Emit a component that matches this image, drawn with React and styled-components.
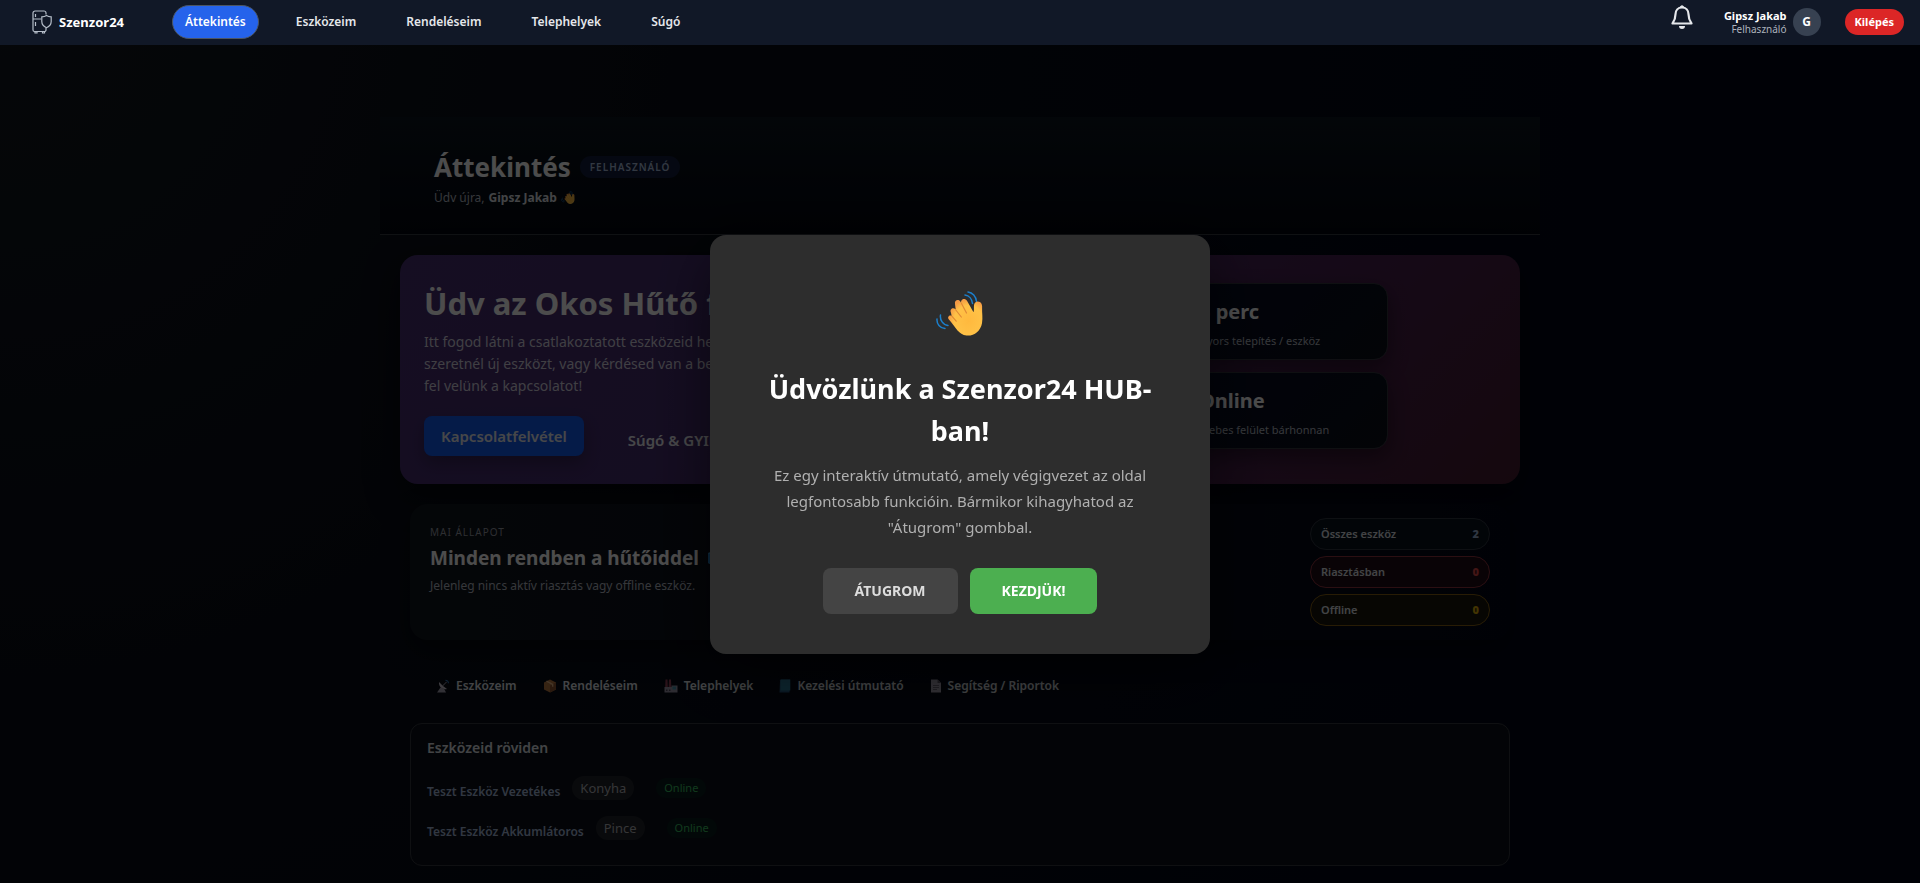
import { useState } from 'react';
import styled, { createGlobalStyle, css } from 'styled-components';

const navItems = ['Áttekintés', 'Eszközeim', 'Rendeléseim', 'Telephelyek', 'Súgó'];

const heroStats = [
  { value: '5 perc', label: 'Gyors telepítés / eszköz' },
  { value: 'Online', label: 'Webes felület bárhonnan' },
];

const counters = [
  { label: 'Összes eszköz', value: 2, tone: 'neutral' },
  { label: 'Riasztásban', value: 0, tone: 'danger' },
  { label: 'Offline', value: 0, tone: 'warning' },
];

const devices = [
  { name: 'Teszt Eszköz Vezetékes', place: 'Konyha', status: 'Online' },
  { name: 'Teszt Eszköz Akkumlátoros', place: 'Pince', status: 'Online' },
];

function App() {
  const [active, setActive] = useState('Áttekintés');
  const [tourOpen, setTourOpen] = useState(true);

  return (
    <>
      <GlobalStyle />
      <TopBar>
        <Brand href="#">
          <FridgeLogo />
          Szenzor24
        </Brand>
        <Nav>
          {navItems.map((item) => (
            <NavLink
              key={item}
              href="#"
              $active={item === active}
              onClick={() => setActive(item)}
            >
              {item}
            </NavLink>
          ))}
        </Nav>
        <BellButton type="button" aria-label="Értesítések">
          <BellIcon />
        </BellButton>
        <UserBox>
          <div>
            <UserName>Gipsz Jakab</UserName>
            <UserRole>Felhasználó</UserRole>
          </div>
          <Avatar>G</Avatar>
        </UserBox>
        <LogoutButton type="button">Kilépés</LogoutButton>
      </TopBar>

      <Main>
        <PageHeader>
          <TitleRow>
            <PageTitle>Áttekintés</PageTitle>
            <RoleBadge>Felhasználó</RoleBadge>
          </TitleRow>
          <Greeting>
            Üdv újra, <strong>Gipsz Jakab</strong>
            <WaveIcon size={14} />
          </Greeting>
        </PageHeader>

        <Hero>
          <HeroText>
            <HeroTitle>Üdv az Okos Hűtő felületén!</HeroTitle>
            <HeroLead>
              Itt fogod látni a csatlakoztatott eszközeid helyzetét. Ha
              <br />
              szeretnél új eszközt, vagy kérdésed van a beállításról, vedd
              <br />
              fel velünk a kapcsolatot!
            </HeroLead>
            <HeroActions>
              <PrimaryLink href="#">Kapcsolatfelvétel</PrimaryLink>
              <GhostLink href="#">Súgó &amp; GYIK</GhostLink>
            </HeroActions>
          </HeroText>
          <StatList>
            {heroStats.map((stat) => (
              <StatCard key={stat.value}>
                <StatValue>{stat.value}</StatValue>
                <StatLabel>{stat.label}</StatLabel>
              </StatCard>
            ))}
          </StatList>
        </Hero>

        <StatusCard>
          <div>
            <StatusEyebrow>Mai állapot</StatusEyebrow>
            <StatusTitle>
              Minden rendben a hűtőiddel
              <CubeIcon />
            </StatusTitle>
            <StatusText>Jelenleg nincs aktív riasztás vagy offline eszköz.</StatusText>
          </div>
          <CounterList>
            {counters.map((counter) => (
              <Counter key={counter.label} $tone={counter.tone}>
                <span>{counter.label}</span>
                <b>{counter.value}</b>
              </Counter>
            ))}
          </CounterList>
        </StatusCard>

        <QuickLinks>
          <QuickLink href="#">
            <DishIcon />
            Eszközeim
          </QuickLink>
          <QuickLink href="#">
            <BoxIcon />
            Rendeléseim
          </QuickLink>
          <QuickLink href="#">
            <FactoryIcon />
            Telephelyek
          </QuickLink>
          <QuickLink href="#">
            <BookIcon />
            Kezelési útmutató
          </QuickLink>
          <QuickLink href="#">
            <PageIcon />
            Segítség / Riportok
          </QuickLink>
        </QuickLinks>

        <DevicePanel>
          <PanelTitle>Eszközeid röviden</PanelTitle>
          {devices.map((device) => (
            <DeviceRow key={device.name}>
              <DeviceLink href="#">{device.name}</DeviceLink>
              <PlaceBadge>{device.place}</PlaceBadge>
              <OnlineBadge>{device.status}</OnlineBadge>
            </DeviceRow>
          ))}
        </DevicePanel>
      </Main>

      {tourOpen && (
        <Overlay>
          <Modal role="dialog" aria-modal="true" aria-labelledby="tour-title">
            <WaveIcon size={48} />
            <ModalTitle id="tour-title">Üdvözlünk a Szenzor24 HUB-ban!</ModalTitle>
            <ModalText>
              Ez egy interaktív útmutató, amely végigvezet az oldal legfontosabb
              funkcióin. Bármikor kihagyhatod az "Átugrom" gombbal.
            </ModalText>
            <ModalActions>
              <ModalButton type="button" onClick={() => setTourOpen(false)}>
                Átugrom
              </ModalButton>
              <ModalButton type="button" $primary>
                Kezdjük!
              </ModalButton>
            </ModalActions>
          </Modal>
        </Overlay>
      )}
    </>
  );
}

export default App;

function FridgeLogo() {
  return (
    <svg width="20" height="24" viewBox="0 0 20 24" fill="none" stroke="#b6bec9" strokeWidth="1.2">
      <path d="M14 4.500V3a2 2 0 0 0-2-2H3a2 2 0 0 0-2 2v17a1.500 1.500 0 0 0 1.500 1.500h10A1.500 1.500 0 0 0 14 20v-2" />
      <path d="M1 9h8M3.500 4v3M3.500 12v4M3 21.500V23h2v-1.500M10.500 21.500V23h2v-1.500" />
      <path d="M14.500 5.500c1.500 1 3 1.300 4.700 1.300v4.700c0 3-2 5-4.700 6.200-2.700-1.200-4.700-3.200-4.700-6.200V6.800c1.700 0 3.200-.3 4.700-1.300Z" />
    </svg>
  );
}

function BellIcon() {
  return (
    <svg width="24" height="26" viewBox="0 0 24 26" fill="none">
      <path
        d="M12 3.500c-4 0-6.500 3-6.500 6.800 0 4.700-1.200 6.700-3 9.200h19c-1.800-2.500-3-4.500-3-9.200 0-3.800-2.500-6.800-6.500-6.800Z"
        stroke="#e5e7eb"
        strokeWidth="2.200"
        strokeLinejoin="round"
      />
      <path d="M10.300 3.500a1.700 1.700 0 0 1 3.400 0" fill="#e5e7eb" stroke="#e5e7eb" />
      <path d="M9 22h6a3 3 0 0 1-6 0Z" fill="#e5e7eb" />
    </svg>
  );
}

function WaveIcon({ size }) {
  return (
    <svg width={size} height={size} viewBox="0 0 48 48" fill="none">
      <defs>
        <radialGradient id={`palm${size}`} cx="0.6" cy="0.6" r="0.6">
          <stop offset="0" stopColor="#ffb93e" />
          <stop offset="0.7" stopColor="#ffc247" />
          <stop offset="1" stopColor="#f59a45" />
        </radialGradient>
      </defs>
      <g stroke="#1c7fcb" strokeWidth="1.500" strokeLinecap="round">
        <path d="M32 1c4.500.5 8 4.500 8.500 9.500M29 4c4 .5 7 4 7.500 8.500" />
        <path d="M1 28c-.5 5 3 9 8 9.500M4.500 24c-.8 5 2.500 10 7.500 10.500" />
      </g>
      <path
        d="M15 31 12.500 28c-1.300-2 1-4.500 3.200-3l-.8-3.500c-1.500-3.500 2.300-5.800 4.800-3l-.7-5.500c-.8-4 3.800-5.500 5.600-2l.6 1c-1-3.800 3.600-5.800 5.800-2.300l6.500 11.500c.7-2 .3-4.500.5-7 .2-4.500 5.800-5 7.500-1.500.7 1.500.7 3 .6 4.500-.2 5 .9 9-.1 15-1.500 8-8 13-15.500 12.300-4-.4-6.500-2.500-9-5Z"
        fill={`url(#palm${size})`}
      />
      <g stroke="#e08a35" strokeWidth="1.200" strokeLinecap="round">
        <path d="m25.500 12.500 5 9.500M19.800 19l5.500 7M15.800 25.200l4.400 5" />
      </g>
    </svg>
  );
}

function CubeIcon() {
  return (
    <svg width="18" height="18" viewBox="0 0 18 18">
      <path d="M1 4 9 1l8 3v10l-8 3-8-3Z" fill="#5ab8ea" />
      <path d="m1 4 8 3v10l-8-3Z" fill="#2a86c9" />
    </svg>
  );
}

function DishIcon() {
  return (
    <svg width="14" height="14" viewBox="0 0 14 14">
      <path d="M3 3c-.5 4.500 3 8 8 7L7 7Z" fill="#cfc9d8" />
      <path d="M4.500 8.500 1 13.500h9L8 9.500Z" fill="#a8a3b4" />
      <path d="m6.500 7 4-4" stroke="#a9a4b5" strokeWidth="1" />
      <path d="M9.500 1.300a3 3 0 0 1 3 3" stroke="#2f6fae" strokeWidth="1.200" fill="none" />
    </svg>
  );
}

function BoxIcon() {
  return (
    <svg width="14" height="14" viewBox="0 0 14 14">
      <path d="m7 .5 6 3v7l-6 3-6-3v-7Z" fill="#b97842" />
      <path d="m7 6.500 6-3v7l-6 3Z" fill="#8c5530" />
      <path d="m3.500 2.200 6.200 3.100v2.500" stroke="#e6b98a" strokeWidth="1.300" fill="none" />
    </svg>
  );
}

function FactoryIcon() {
  return (
    <svg width="14" height="14" viewBox="0 0 14 14">
      <path d="M1.500.5h2l.3 8H1.200ZM5 .5h2l.3 8H4.700Z" fill="#8e3f55" />
      <path d="M.5 8h7V6.500h6v7H.5Z" fill="#9a95a8" />
      <path d="M8.500 7.500H12v3H8.500Z" fill="#4794ae" />
      <path d="M2 10.500h1.500V12H2ZM5 10.500h1.500V12H5Z" fill="#4c4858" />
    </svg>
  );
}

function BookIcon() {
  return (
    <svg width="12" height="14" viewBox="0 0 12 14">
      <path d="M1 1.500.5 13.500h10l.5-13H2Z" fill="#23567f" />
      <path d="M1.500.5h9.800v11H1.500Z" fill="#2e7f9f" />
    </svg>
  );
}

function PageIcon() {
  return (
    <svg width="12" height="14" viewBox="0 0 12 14">
      <path d="M1 .5h6.500l3.500 3.500v9.500H1Z" fill="#aca7b8" />
      <path d="M7.500.5V4H11Z" fill="#5e5a6a" />
      <path d="M3 6.500h6M3 8.500h6M3 10.500h4" stroke="#5e5a6a" strokeWidth=".8" />
    </svg>
  );
}

const GlobalStyle = createGlobalStyle`
  * {
    box-sizing: border-box;
  }

  body {
    margin: 0;
    min-height: 100vh;
    background: radial-gradient(circle at top left, #13181f 0, #080c16 35%, #020617 75%);
    color: #fff;
    font-family: 'Noto Sans', 'Open Sans', sans-serif;
    font-size: 13px;
  }

  h1, h2, h3, p {
    margin: 0;
  }

  a {
    color: inherit;
    text-decoration: none;
  }

  button {
    border: 0;
    font-family: inherit;
    cursor: pointer;
  }
`;

const TopBar = styled.header`
  position: sticky;
  top: 0;
  z-index: 20;
  display: flex;
  align-items: center;
  height: 45px;
  padding: 0 16px 2px 32px;
  background: #111827;
`;

const Brand = styled.a`
  display: flex;
  align-items: center;
  gap: 7px;
  margin-right: 48px;
  font-size: 13px;
  font-weight: 700;
`;

const Nav = styled.nav`
  display: flex;
  flex: 1;
  gap: 24px;
`;

const NavLink = styled.a`
  padding: 7px 12px;
  border: 1px solid ${(props) => (props.$active ? '#4b5563' : 'transparent')};
  border-radius: 17px;
  background: ${(props) => (props.$active ? '#2563eb' : 'transparent')};
  color: ${(props) => (props.$active ? '#fff' : '#e5e7eb')};
  font-size: 12px;
  font-weight: 600;
  line-height: 18px;
`;

const BellButton = styled.button`
  display: flex;
  margin: 0 30px 10px 0;
  padding: 0;
  background: none;
`;

const UserBox = styled.div`
  display: flex;
  align-items: center;
  gap: 6px;
  margin-right: 24px;
  text-align: right;
`;

const UserName = styled.div`
  font-size: 11px;
  font-weight: 700;
  line-height: 14px;
`;

const UserRole = styled.div`
  color: #adb3bd;
  font-size: 10px;
  line-height: 12px;
`;

const Avatar = styled.div`
  width: 28px;
  height: 28px;
  border-radius: 50%;
  background: #374151;
  font-size: 12px;
  font-weight: 700;
  line-height: 28px;
  text-align: center;
`;

const LogoutButton = styled.button`
  padding: 4px 10px;
  border-radius: 13px;
  background: #dc2626;
  color: #fff;
  font-size: 11px;
  font-weight: 700;
  line-height: 18px;
`;

const Main = styled.main`
  max-width: 1160px;
  margin: 72px auto 0;
  padding-bottom: 16px;
`;

const PageHeader = styled.section`
  padding: 33px 54px 27px;
  border-bottom: 1px solid #363a42;
  background: linear-gradient(180deg, #0b151e, #03060f);
`;

const TitleRow = styled.div`
  display: flex;
  align-items: center;
  gap: 9px;
`;

const PageTitle = styled.h1`
  font-size: 26px;
  font-weight: 700;
  line-height: 34px;
`;

const RoleBadge = styled.span`
  padding: 2px 10px;
  border-radius: 11px;
  background: #131d3c;
  color: #a9bddd;
  font-size: 10px;
  font-weight: 600;
  letter-spacing: 1px;
  line-height: 18px;
  text-transform: uppercase;
`;

const Greeting = styled.p`
  display: flex;
  align-items: center;
  gap: 4px;
  padding-top: 5px;
  color: #b4bac4;
  font-size: 12px;
  line-height: 18px;

  strong {
    color: #dfe2e7;
  }
`;

const Hero = styled.section`
  display: flex;
  justify-content: space-between;
  margin: 20px 20px 0;
  padding: 28px 132px 28px 24px;
  border-radius: 18px;
  background: linear-gradient(135deg, #482f73 0%, #452c6e 35%, #481f4c 75%, #461c30 100%);
  box-shadow: 0 12px 32px rgba(0, 0, 0, 0.5);
`;

const HeroText = styled.div`
  flex: 1;
`;

const HeroTitle = styled.h2`
  font-size: 31px;
  font-weight: 700;
  line-height: 40px;
`;

const HeroLead = styled.p`
  margin-top: 8px;
  color: #d6d3e0;
  font-size: 14px;
  line-height: 22px;
`;

const HeroActions = styled.div`
  display: flex;
  align-items: center;
  gap: 44px;
  margin-top: 19px;
`;

const PrimaryLink = styled.a`
  padding: 9px 17px;
  border-radius: 8px;
  background: #115af0;
  color: #eceef4;
  font-size: 15px;
  font-weight: 600;
  line-height: 22px;
  box-shadow: 0 8px 16px rgba(0, 0, 0, 0.25);
`;

const GhostLink = styled.a`
  padding-top: 8px;
  color: #eceef4;
  font-size: 15px;
  font-weight: 600;
  line-height: 22px;
`;

const StatList = styled.div`
  display: grid;
  gap: 12px;
  align-content: start;
  width: 208px;
`;

const StatCard = styled.div`
  height: 77px;
  padding: 13px 18px;
  border: 1px solid #33363e;
  border-radius: 14px;
  background: linear-gradient(135deg, #060b24, #0a0f18);
  box-shadow: 0 8px 20px rgba(0, 0, 0, 0.4);
`;

const StatValue = styled.div`
  font-size: 20px;
  font-weight: 700;
  line-height: 30px;
`;

const StatLabel = styled.div`
  margin-top: 6px;
  color: #b4bac4;
  font-size: 11px;
  line-height: 16px;
  white-space: nowrap;
`;

const StatusCard = styled.section`
  display: flex;
  justify-content: space-between;
  margin: 20px 30px 0;
  padding: 14px 20px;
  border-radius: 18px;
  background: linear-gradient(90deg, #10151d, #030614);
  box-shadow: 0 12px 28px rgba(0, 0, 0, 0.4);
`;

const StatusEyebrow = styled.div`
  padding-top: 5px;
  color: #989ca5;
  font-size: 10px;
  letter-spacing: 1px;
  line-height: 18px;
  text-transform: uppercase;
`;

const StatusTitle = styled.h2`
  display: flex;
  align-items: center;
  gap: 8px;
  margin-top: 4px;
  font-size: 19px;
  font-weight: 700;
  line-height: 26px;
`;

const StatusText = styled.p`
  margin-top: 5px;
  color: #b4bac4;
  font-size: 12px;
  line-height: 20px;
`;

const CounterList = styled.div`
  display: grid;
  gap: 6px;
  width: 180px;
`;

const tones = {
  neutral: css`
    border-color: #2f3641;
    background: #09111c;

    b {
      color: #9db4d8;
    }
  `,
  danger: css`
    border-color: #8f323e;
    background: #200c14;

    b {
      color: #e24848;
    }
  `,
  warning: css`
    border-color: #855f12;
    background: #18140c;

    b {
      color: #e0b008;
    }
  `,
};

const Counter = styled.div`
  display: flex;
  justify-content: space-between;
  padding: 6px 10px;
  border: 1px solid;
  border-radius: 16px;
  color: #dfe2e7;
  font-size: 11px;
  font-weight: 600;
  line-height: 18px;
  ${(props) => tones[props.$tone]}
`;

const QuickLinks = styled.nav`
  display: flex;
  flex-wrap: wrap;
  gap: 26px;
  margin: 36px 56px 0;
`;

const QuickLink = styled.a`
  display: flex;
  align-items: center;
  gap: 6px;
  color: #dfe2e7;
  font-size: 12px;
  font-weight: 600;
  line-height: 20px;
`;

const DevicePanel = styled.section`
  margin: 27px 30px 0;
  padding: 12px 16px 19px;
  border: 1px solid #34373e;
  border-radius: 12px;
  background: #0b1018;
`;

const PanelTitle = styled.h3`
  margin-bottom: 10px;
  color: #dfe2e7;
  font-size: 14px;
  font-weight: 600;
  line-height: 24px;
`;

const DeviceRow = styled.div`
  display: flex;
  align-items: center;
  height: 36px;

  & + & {
    margin-top: 4px;
  }
`;

const DeviceLink = styled.a`
  padding-top: 8px;
  color: #a4b8da;
  font-size: 12px;
  font-weight: 600;
  line-height: 20px;
`;

const PlaceBadge = styled.span`
  margin-left: 12px;
  padding: 2px 8px;
  border-radius: 12px;
  background: #21232a;
  color: #b2b4b9;
  font-size: 13px;
  line-height: 20px;
`;

const OnlineBadge = styled.span`
  margin-left: 22px;
  padding: 1px 8px;
  border-radius: 10px;
  background: #081d1c;
  color: #3bc062;
  font-size: 11px;
  line-height: 18px;
`;

const Overlay = styled.div`
  position: fixed;
  inset: 0;
  z-index: 10;
  display: flex;
  align-items: center;
  justify-content: center;
  padding-top: 6px;
  background: rgba(0, 0, 0, 0.7);
`;

const Modal = styled.div`
  display: flex;
  flex-direction: column;
  align-items: center;
  width: 500px;
  padding: 56px 40px 40px;
  border-radius: 16px;
  background: #2d2d2d;
  box-shadow: 0 20px 60px rgba(0, 0, 0, 0.5);
  text-align: center;
`;

const ModalTitle = styled.h2`
  margin-top: 29px;
  font-size: 27px;
  font-weight: 700;
  line-height: 42px;
`;

const ModalText = styled.p`
  margin-top: 10px;
  padding: 0 12px;
  color: #b0b0b0;
  font-size: 15px;
  line-height: 26px;
`;

const ModalActions = styled.div`
  display: flex;
  gap: 12px;
  margin-top: 28px;
`;

const ModalButton = styled.button`
  padding: 12px 32px;
  border-radius: 8px;
  background: ${(props) => (props.$primary ? '#4caf50' : '#444')};
  color: ${(props) => (props.$primary ? '#fff' : '#ddd')};
  font-size: 14px;
  font-weight: 700;
  line-height: 22px;
  text-transform: uppercase;
`;
